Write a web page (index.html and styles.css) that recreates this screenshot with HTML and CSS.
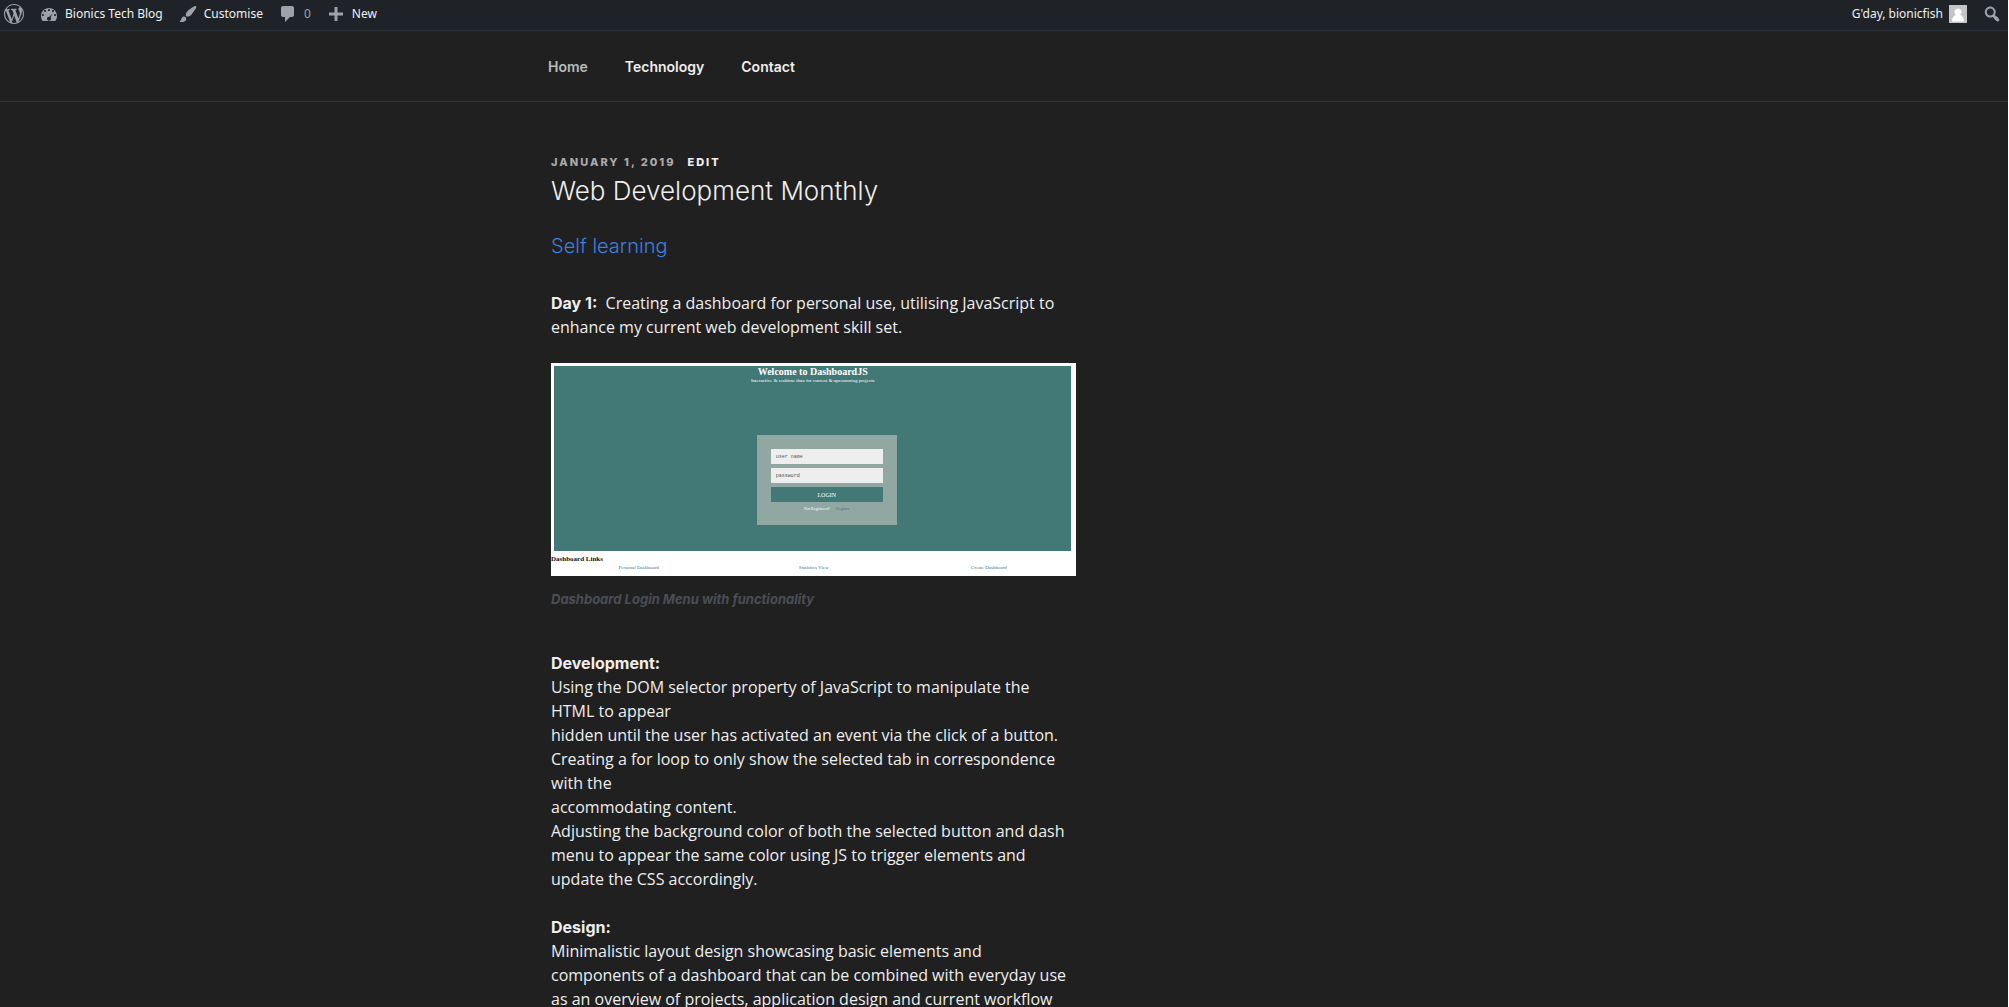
FILE: index.html
```html
<!DOCTYPE html>
<html lang="en-AU">
<head>
<meta charset="utf-8">
<meta name="viewport" content="width=device-width, initial-scale=1">
<title>Web Development Monthly – Bionics Tech Blog</title>
<link rel="stylesheet" href="styles.css">
</head>
<body>
<nav class="adminbar" aria-label="Toolbar">
  <a class="adminbar-item" href="#" aria-label="About WordPress">
    <svg class="icon" viewBox="0 0 20 20"><path d="M20 10c0-5.51-4.49-10-10-10C4.48 0 0 4.49 0 10c0 5.52 4.48 10 10 10 5.51 0 10-4.48 10-10zM7.78 15.37L4.37 6.22c.55-.02 1.17-.08 1.17-.08.5-.06.44-1.13-.06-1.11 0 0-1.45.11-2.37.11-.18 0-.37 0-.58-.01C4.12 2.69 6.87 1.11 10 1.11c2.33 0 4.45.87 6.05 2.34-.68-.11-1.65.39-1.65 1.58 0 .74.45 1.36.9 2.1.35.61.55 1.36.55 2.46 0 1.49-1.4 5-1.4 5l-3.03-8.37c.54-.02.82-.17.82-.17.5-.05.44-1.25-.06-1.22 0 0-1.44.12-2.38.12-.87 0-2.33-.12-2.33-.12-.5-.03-.56 1.2-.06 1.22l.92.08 1.26 3.41zM17.41 10c.24-.64.74-1.87.43-4.25.7 1.29 1.05 2.71 1.05 4.25 0 3.29-1.73 6.24-4.4 7.78.97-2.59 1.94-5.2 2.92-7.78zM6.1 18.09C3.12 16.65 1.11 13.53 1.11 10c0-1.3.23-2.48.72-3.59C3.25 10.3 4.67 14.2 6.1 18.09zm4.03-6.63l2.58 6.98c-.86.29-1.76.45-2.71.45-.79 0-1.57-.11-2.29-.33.81-2.38 1.62-4.74 2.42-7.1z"/></svg>
  </a>
  <a class="adminbar-item" href="#">
    <svg class="icon" viewBox="0 0 20 20"><path d="M3.76 17h12.48c1.1-1.37 1.76-3.11 1.76-5 0-4.42-3.58-8-8-8s-8 3.58-8 8c0 1.89.66 3.63 1.76 5zM10 5c.55 0 1 .45 1 1s-.45 1-1 1-1-.45-1-1 .45-1 1-1zM6 6c.55 0 1 .45 1 1s-.45 1-1 1-1-.45-1-1 .45-1 1-1zm8 0c.55 0 1 .45 1 1s-.45 1-1 1-1-.45-1-1 .45-1 1-1zm-.63 3.45l-1.8 3.93c.27.35.43.78.43 1.25 0 1.1-.9 2-2 2s-2-.9-2-2 .9-2 2-2c.18 0 .35.02.51.07zM4 10c.55 0 1 .45 1 1s-.45 1-1 1-1-.45-1-1 .45-1 1-1zm12 0c.55 0 1 .45 1 1s-.45 1-1 1-1-.45-1-1 .45-1 1-1z" fill-rule="evenodd"/></svg>
    <span>Bionics Tech Blog</span>
  </a>
  <a class="adminbar-item" href="#">
    <svg class="icon" viewBox="0 0 20 20"><path d="M18.33 3.57s.27-.8-.31-1.36c-.53-.52-1.22-.24-1.22-.24-.61.3-5.76 3.47-7.67 5.57-.86.96-2.06 3.79-1.09 4.82.92.98 3.96-.17 4.79-1 2.06-2.06 5.21-7.17 5.5-7.79zM1.4 17.65c2.37-1.56 1.46-3.41 3.23-4.64.93-.65 2.22-.62 3.08.29.63.67.8 2.57-.16 3.46-1.57 1.45-4 1.55-6.15.89z"/></svg>
    <span>Customise</span>
  </a>
  <a class="adminbar-item" href="#" aria-label="0 comments">
    <svg class="icon" viewBox="0 0 20 20"><path d="M5 2h9c1.100 0 2 .9 2 2v7c0 1.100-.9 2-2 2h-2l-5 5v-5H5c-1.100 0-2-.9-2-2V4c0-1.100.9-2 2-2z"/></svg>
    <span class="count">0</span>
  </a>
  <a class="adminbar-item" href="#">
    <svg class="icon" viewBox="0 0 20 20"><path d="M17 8.500v3h-5.500V17h-3v-5.500H3v-3h5.500V3h3v5.500H17z"/></svg>
    <span>New</span>
  </a>
  <a class="adminbar-item account" href="#">
    <span>G'day, bionicfish</span>
    <svg class="avatar" viewBox="0 0 18 18"><path fill="#c3c4c7" d="M0 0h18v18H0z"/><path fill="#fff" d="M9 3.500a3.600 3.600 0 0 1 2 6.600c2.600.8 4 3 4 6.400H3c0-3.400 1.400-5.600 4-6.400a3.600 3.600 0 0 1 2-6.600z"/></svg>
  </a>
  <a class="adminbar-item" href="#" aria-label="Search">
    <svg class="icon" viewBox="0 0 20 20"><path d="M12.140 4.180c1.870 1.870 2.110 4.750.72 6.890.12.100.22.210.36.310.2.160.47.360.81.590.34.240.56.390.66.470.42.310.73.570.94.780.32.320.6.650.84 1 .25.350.44.690.59 1.040.14.350.21.680.18 1-.02.320-.14.590-.36.810s-.49.340-.81.360c-.31.020-.65-.04-.99-.19-.35-.14-.7-.34-1.040-.59-.35-.24-.68-.52-1-.84-.21-.21-.47-.52-.77-.93-.1-.13-.25-.35-.47-.66-.22-.32-.4-.57-.56-.78-.16-.2-.29-.35-.44-.5-2.070 1.090-4.690.760-6.440-.98-2.140-2.150-2.140-5.640 0-7.780 2.150-2.150 5.630-2.150 7.780 0zm-1.410 6.360c1.360-1.370 1.360-3.580 0-4.950-1.370-1.370-3.590-1.370-4.950 0-1.370 1.370-1.370 3.580 0 4.950 1.360 1.370 3.580 1.370 4.950 0z"/></svg>
  </a>
</nav>

<header class="site-header">
  <nav class="wrap menu" aria-label="Top Menu">
    <a class="current" href="#">Home</a>
    <a href="#">Technology</a>
    <a href="#">Contact</a>
  </nav>
</header>

<main class="wrap">
  <article class="post">
    <header class="entry-header">
      <div class="entry-meta"><time datetime="2019-01-01">January 1, 2019</time><a href="#">Edit</a></div>
      <h1>Web Development Monthly</h1>
    </header>
    <h2>Self learning</h2>
    <p><strong>Day 1:</strong>&nbsp; Creating a dashboard for personal use, utilising JavaScript to enhance my current web development skill set.</p>
    <figure>
      <div class="shot">
        <div class="shot-hero">
          <div class="shot-title">Welcome to DashboardJS</div>
          <div class="shot-tagline">Interactive &amp; realtime data for current &amp; upcomming projects</div>
          <form class="shot-login">
            <input type="text" placeholder="user name" aria-label="User name">
            <input type="password" placeholder="password" aria-label="Password">
            <button type="button">LOGIN</button>
            <div class="shot-register"><span>Not Registered?</span><a href="#">Register</a></div>
          </form>
        </div>
        <div class="shot-heading">Dashboard Links</div>
        <div class="shot-links">
          <a href="#">Personal Dashboard</a>
          <a href="#">Statistics View</a>
          <a href="#">Create Dashboard</a>
        </div>
      </div>
      <figcaption>Dashboard Login Menu with functionality</figcaption>
    </figure>
    <p><strong>Development:</strong><br>Using the DOM selector property of JavaScript to manipulate the HTML to appear<br>hidden until the user has activated an event via the click of a button.<br>Creating a for loop to only show the selected tab in correspondence with the<br>accommodating content.<br>Adjusting the background color of both the selected button and dash menu to appear the same color using JS to trigger elements and update the CSS accordingly.</p>
    <p><strong>Design:</strong><br>Minimalistic layout design showcasing basic elements and<br>components of a dashboard that can be combined with everyday use as an overview of projects, application design and current workflow</p>
  </article>
</main>
</body>
</html>
```
FILE: styles.css
```css
* {
  box-sizing: border-box;
}

html {
  background: #202020;
  overflow: hidden;
}

body {
  margin: 0;
  border-right: 1px solid #fff;
  background: #202020;
  color: #eee;
  font: 16px/24px Inter, "Liberation Sans", sans-serif;
}

a {
  color: inherit;
  text-decoration: none;
}

/* Toolbar */
.adminbar {
  display: flex;
  align-items: center;
  gap: 15px;
  height: 31px;
  padding: 0 6px 2px 4px;
  border-bottom: 1px solid #2c3338;
  background: #1f2327;
  color: #f0f0f1;
  font: 12px/28px "Noto Sans", "Open Sans", sans-serif;
}

.adminbar-item {
  display: flex;
  align-items: center;
  gap: 6px;
}

.icon {
  width: 20px;
  height: 20px;
  fill: #9ca2a7;
}

.count {
  color: #9ca2a7;
}

.account {
  margin-left: auto;
}

.avatar {
  width: 18px;
  height: 18px;
}

/* Header menu */
.wrap {
  max-width: 1002px;
  margin: 0 auto;
  padding: 0 48px;
}

.site-header {
  border-bottom: 1px solid #333;
}

.menu {
  display: flex;
  gap: 37px;
  padding: 26px 45px 24px;
  font-size: 14px;
  line-height: 20px;
  font-weight: 600;
}

.menu .current {
  color: #bbb;
}

/* Post */
.post {
  width: 58%;
  padding-top: 52px;
}

.entry-meta {
  display: flex;
  gap: 12px;
  font-size: 11px;
  line-height: 16px;
  font-weight: 800;
  letter-spacing: 2px;
  text-transform: uppercase;
}

.entry-meta time {
  color: #aaa;
}

h1 {
  margin: 3px 0 23px;
  font-size: 26px;
  line-height: 36px;
  font-weight: 300;
}

h2 {
  margin: 0 0 31px;
  font-size: 20px;
  line-height: 28px;
  font-weight: 300;
  color: #3f7fe0;
}

p {
  margin: 0 0 24px;
  font-family: "Open Sans", "Noto Sans", sans-serif;
}

strong {
  font-family: Inter, "Liberation Sans", sans-serif;
  font-weight: 700;
}

figure {
  margin: 0 0 42px;
}

figcaption {
  margin-top: 13px;
  font-size: 13px;
  line-height: 20px;
  font-weight: 700;
  font-style: italic;
  color: #4b4e55;
}

/* Picture of the dashboard's login page */
.shot {
  padding-top: 3px;
  height: 213px;
  background: #fff;
  color: #111;
  font: 5px/6px "Liberation Serif", serif;
}

.shot-hero {
  display: flex;
  flex-direction: column;
  align-items: center;
  height: 185px;
  margin: 0 5px 0 3px;
  background: #427876;
  color: #fff;
}

.shot-title {
  font-size: 10px;
  line-height: 12px;
  font-weight: 700;
}

.shot-tagline {
  margin-bottom: 51px;
}

.shot-login {
  display: grid;
  grid-auto-rows: 15px;
  gap: 4px;
  width: 140px;
  height: 90px;
  margin-left: 28px;
  padding: 14px;
  background: #91a7a2;
}

.shot-login input {
  width: 100%;
  padding: 0 5px;
  border: 0;
  background: #eee;
  font: 5px/6px "Liberation Mono", monospace;
}

.shot-login input::placeholder {
  color: #555;
}

.shot-login button {
  padding: 0;
  border: 0;
  background: #427876;
  color: #fff;
  font: 6px/6px "Liberation Serif", serif;
}

.shot-register {
  display: flex;
  justify-content: center;
  gap: 6px;
  font-size: 4px;
}

.shot-register a {
  color: #427876;
}

.shot-heading {
  margin-top: 4px;
  font-size: 7px;
  line-height: 8px;
  font-weight: 700;
}

.shot-links {
  display: grid;
  grid-template-columns: repeat(3, 1fr);
  margin-top: 2px;
  text-align: center;
  color: #427876;
}
```
